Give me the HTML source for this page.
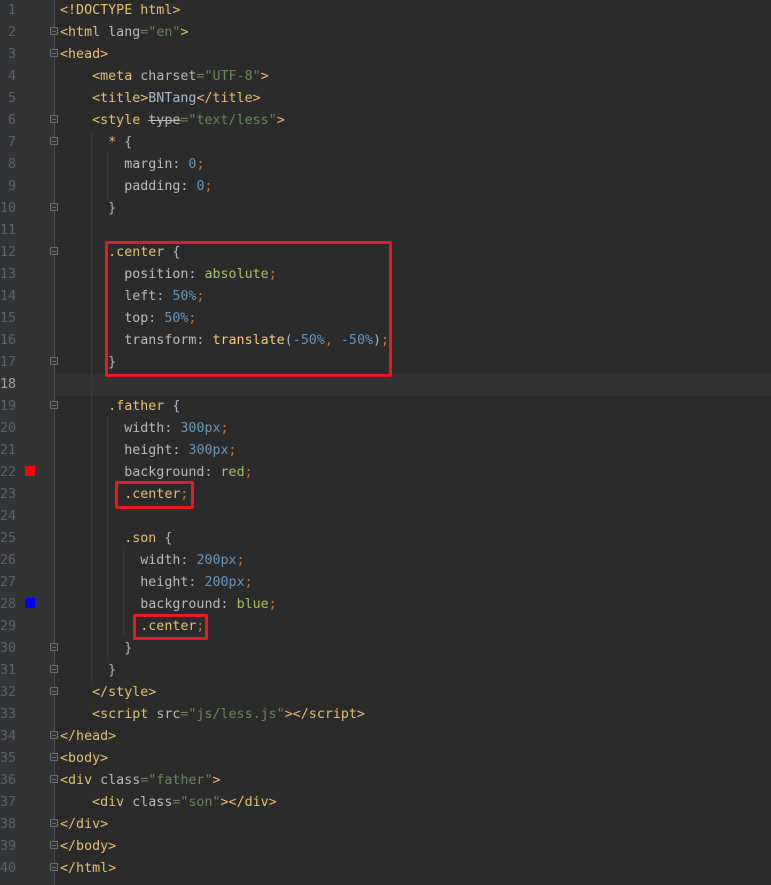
<!DOCTYPE html>
<html><head><meta charset="utf-8"><style>
*{margin:0;padding:0}
body{width:771px;height:885px;background:#2b2b2b;position:relative;overflow:hidden;font-family:"DejaVu Sans Mono","Liberation Mono",monospace;font-size:13.33px}
.g{position:absolute;left:0;top:0;width:54px;height:885px;background:#313335}
.fl{position:absolute;left:54px;top:0;width:1px;height:885px;background:#4a4c4e}
.cur{position:absolute;left:55px;top:374px;width:716px;height:22px;background:#323232}
.ln{position:absolute;left:0;width:16px;text-align:right;color:#606366;line-height:22px;height:22px;margin-top:1px}
.c{position:absolute;left:60px;line-height:22px;height:22px;white-space:pre;color:#a9b7c6;margin-top:1px}
.t{color:#e8bf6a}.a{color:#bababa}.s{color:#6a8759}.n{color:#6897bb}.o{color:#cc7832}.v{color:#a5c261}.y{color:#ffc66d}.p{color:#bababa}
.box{position:absolute;border:3px solid #e51a24;border-radius:2px}
.ig{position:absolute;width:1px;background:#3b3b3b}
.fm{position:absolute;left:50px;width:8px;height:8px;border:1px solid #6e6e6e;background:#313335;box-sizing:border-box}
.fm:after{content:"";position:absolute;left:1px;top:3px;width:4px;height:1px;background:#6e6e6e}
</style></head><body>
<div class="g"></div><div class="fl"></div><div class="cur"></div>
<div class="ig" style="left:91px;top:132px;height:550px"></div>
<div class="ig" style="left:107px;top:418px;height:240px"></div>
<div class="ig" style="left:107px;top:154px;height:44px"></div>
<div class="ig" style="left:123px;top:550px;height:86px"></div>

<div class="ln" style="top:-1px">1</div><div class="ln" style="top:21px">2</div><div class="ln" style="top:43px">3</div><div class="ln" style="top:65px">4</div><div class="ln" style="top:87px">5</div><div class="ln" style="top:109px">6</div><div class="ln" style="top:131px">7</div><div class="ln" style="top:153px">8</div><div class="ln" style="top:175px">9</div><div class="ln" style="top:197px">10</div><div class="ln" style="top:219px">11</div><div class="ln" style="top:241px">12</div><div class="ln" style="top:263px">13</div><div class="ln" style="top:285px">14</div><div class="ln" style="top:307px">15</div><div class="ln" style="top:329px">16</div><div class="ln" style="top:351px">17</div><div class="ln" style="top:373px;color:#a4a3a3">18</div><div class="ln" style="top:395px">19</div><div class="ln" style="top:417px">20</div><div class="ln" style="top:439px">21</div><div class="ln" style="top:461px">22</div><div class="ln" style="top:483px">23</div><div class="ln" style="top:505px">24</div><div class="ln" style="top:527px">25</div><div class="ln" style="top:549px">26</div><div class="ln" style="top:571px">27</div><div class="ln" style="top:593px">28</div><div class="ln" style="top:615px">29</div><div class="ln" style="top:637px">30</div><div class="ln" style="top:659px">31</div><div class="ln" style="top:681px">32</div><div class="ln" style="top:703px">33</div><div class="ln" style="top:725px">34</div><div class="ln" style="top:747px">35</div><div class="ln" style="top:769px">36</div><div class="ln" style="top:791px">37</div><div class="ln" style="top:813px">38</div><div class="ln" style="top:835px">39</div><div class="ln" style="top:857px">40</div>

<div style="position:absolute;left:25px;top:466px;width:10px;height:10px;background:#f00"></div>
<div style="position:absolute;left:25px;top:598px;width:10px;height:10px;background:#00f"></div>

<div class="fm" style="top:27px"></div><div class="fm" style="top:49px"></div><div class="fm" style="top:115px"></div><div class="fm" style="top:137px"></div><div class="fm" style="top:203px"></div><div class="fm" style="top:247px"></div><div class="fm" style="top:357px"></div><div class="fm" style="top:401px"></div><div class="fm" style="top:643px"></div><div class="fm" style="top:665px"></div><div class="fm" style="top:687px"></div><div class="fm" style="top:731px"></div><div class="fm" style="top:753px"></div><div class="fm" style="top:775px"></div><div class="fm" style="top:819px"></div><div class="fm" style="top:841px"></div><div class="fm" style="top:863px"></div>

<div class="c" style="top:-1px"><span class="t">&lt;!DOCTYPE html&gt;</span></div>
<div class="c" style="top:21px"><span class="t">&lt;html </span><span class="a">lang</span><span class="s">="en"</span><span class="t">&gt;</span></div>
<div class="c" style="top:43px"><span class="t">&lt;head&gt;</span></div>
<div class="c" style="top:65px">    <span class="t">&lt;meta </span><span class="a">charset</span><span class="s">="UTF-8"</span><span class="t">&gt;</span></div>
<div class="c" style="top:87px">    <span class="t">&lt;title&gt;</span>BNTang<span class="t">&lt;/title&gt;</span></div>
<div class="c" style="top:109px">    <span class="t">&lt;style </span><span class="a" style="text-decoration:line-through">type</span><span class="s">="text/less"</span><span class="t">&gt;</span></div>
<div class="c" style="top:131px">      <span class="t">*</span> {</div>
<div class="c" style="top:153px">        <span class="p">margin</span>: <span class="n">0</span><span class="o">;</span></div>
<div class="c" style="top:175px">        <span class="p">padding</span>: <span class="n">0</span><span class="o">;</span></div>
<div class="c" style="top:197px">      }</div>
<div class="c" style="top:241px">      <span class="t">.center</span> {</div>
<div class="c" style="top:263px">        <span class="p">position</span>: <span class="v">absolute</span><span class="o">;</span></div>
<div class="c" style="top:285px">        <span class="p">left</span>: <span class="n">50%</span><span class="o">;</span></div>
<div class="c" style="top:307px">        <span class="p">top</span>: <span class="n">50%</span><span class="o">;</span></div>
<div class="c" style="top:329px">        <span class="p">transform</span>: <span class="y">translate</span>(<span class="n">-50%</span><span class="o">,</span> <span class="n">-50%</span>)<span class="o">;</span></div>
<div class="c" style="top:351px">      }</div>
<div class="c" style="top:395px">      <span class="t">.father</span> {</div>
<div class="c" style="top:417px">        <span class="p">width</span>: <span class="n">300px</span><span class="o">;</span></div>
<div class="c" style="top:439px">        <span class="p">height</span>: <span class="n">300px</span><span class="o">;</span></div>
<div class="c" style="top:461px">        <span class="p">background</span>: <span class="v">red</span><span class="o">;</span></div>
<div class="c" style="top:483px">        <span class="t">.center</span><span class="o">;</span></div>
<div class="c" style="top:527px">        <span class="t">.son</span> {</div>
<div class="c" style="top:549px">          <span class="p">width</span>: <span class="n">200px</span><span class="o">;</span></div>
<div class="c" style="top:571px">          <span class="p">height</span>: <span class="n">200px</span><span class="o">;</span></div>
<div class="c" style="top:593px">          <span class="p">background</span>: <span class="v">blue</span><span class="o">;</span></div>
<div class="c" style="top:615px">          <span class="t">.center</span><span class="o">;</span></div>
<div class="c" style="top:637px">        }</div>
<div class="c" style="top:659px">      }</div>
<div class="c" style="top:681px">    <span class="t">&lt;/style&gt;</span></div>
<div class="c" style="top:703px">    <span class="t">&lt;script </span><span class="a">src</span><span class="s">="js/less.js"</span><span class="t">&gt;&lt;/script&gt;</span></div>
<div class="c" style="top:725px"><span class="t">&lt;/head&gt;</span></div>
<div class="c" style="top:747px"><span class="t">&lt;body&gt;</span></div>
<div class="c" style="top:769px"><span class="t">&lt;div </span><span class="a">class</span><span class="s">="father"</span><span class="t">&gt;</span></div>
<div class="c" style="top:791px">    <span class="t">&lt;div </span><span class="a">class</span><span class="s">="son"</span><span class="t">&gt;&lt;/div&gt;</span></div>
<div class="c" style="top:813px"><span class="t">&lt;/div&gt;</span></div>
<div class="c" style="top:835px"><span class="t">&lt;/body&gt;</span></div>
<div class="c" style="top:857px"><span class="t">&lt;/html&gt;</span></div>

<div class="box" style="left:105px;top:241px;width:281px;height:130px"></div>
<div class="box" style="left:115px;top:481px;width:73px;height:22px"></div>
<div class="box" style="left:133px;top:614px;width:69px;height:20px"></div>
</body></html>
